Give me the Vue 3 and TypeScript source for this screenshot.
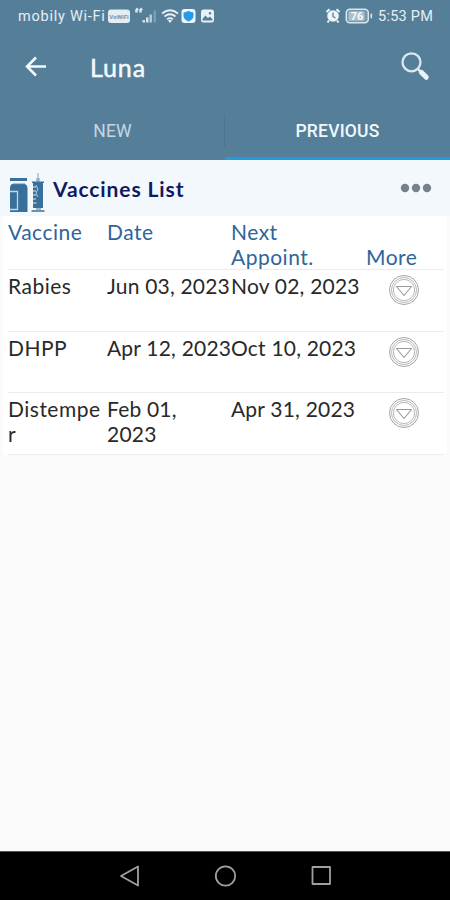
<script setup lang="ts">
interface VaccineRow {
  name: string[]
  date: string[]
  next: string
}

const rows: VaccineRow[] = [
  { name: ['Rabies'], date: ['Jun 03, 2023'], next: 'Nov 02, 2023' },
  { name: ['DHPP'], date: ['Apr 12, 2023'], next: 'Oct 10, 2023' },
  { name: ['Distempe', 'r'], date: ['Feb 01,', '2023'], next: 'Apr 31, 2023' },
]
</script>

<template>
  <div class="screen">
    <header class="top">
      <div class="status">
        <span class="carrier">mobily Wi-Fi</span>
        <svg class="status-icons" width="110" height="20" viewBox="0 0 110 20">
          <rect x="1" y="3.500" width="22" height="13.500" rx="3" fill="#e3edf3" />
          <text x="12" y="13" text-anchor="middle" class="vowifi">VoWiFi</text>
          <path d="M29.500 6.500v-2.500l1.500-1.500M33.500 6.500v-2.500l1.500-1.500" class="quote" />
          <g fill="#d5e3eb">
            <rect x="35.500" y="14" width="2.500" height="2.500" />
            <rect x="39" y="11.500" width="2.500" height="5" />
            <rect x="42.500" y="8.500" width="2.500" height="8" opacity=".75" />
            <rect x="46.500" y="4.500" width="2.500" height="12" opacity=".3" />
          </g>
          <g fill="none" stroke="#e6f0f5" stroke-width="1.700">
            <path d="M55 7.500q8-6.500 16 0" />
            <path d="M57.500 10.500q5.500-4.500 11 0" />
            <path d="M60 13.300q3-2.500 6 0" />
          </g>
          <path d="M61 14.500q2-1.500 4 0l-2 2.500z" fill="#e6f0f5" />
          <rect x="74.500" y="3" width="14" height="14" rx="3" fill="#f0f8fd" />
          <path d="M81.500 4.800q2.400 1.500 5 1.600v3.800q-.5 3.500-5 5.300q-4.500-1.800-5-5.300v-3.800q2.600-.1 5-1.600z" fill="#269bec" />
          <rect x="94" y="3.500" width="13" height="13" rx="2.500" fill="#e8f1f5" />
          <path d="M95.500 13l2.800-3.500 2.700 2.500 2-1.500 2.500 2.800v1.200h-10z" fill="#557f99" />
          <circle cx="103" cy="7.200" r="1.200" fill="#557f99" />
        </svg>
        <svg class="right-icons" width="50" height="20" viewBox="0 0 50 20">
          <circle cx="9" cy="10" r="5.800" fill="#eff5f8" />
          <path d="M2.500 6l3-2.700M15.500 6l-3-2.700M5 14.500l-1.500 2M13 14.500l1.500 2" stroke="#eff5f8" stroke-width="2" />
          <path d="M9 6.500v4l2.500 1.500" fill="none" stroke="#557f99" stroke-width="1.300" />
          <rect x="22.300" y="3.300" width="22" height="13.400" rx="3.500" fill="#7898ac" stroke="#d9e5ec" stroke-width="1.500" />
          <rect x="24.500" y="5.300" width="16" height="9.400" rx="1.500" fill="#a9c0ce" />
          <text x="33" y="14" text-anchor="middle" class="battery">76</text>
          <rect x="46.500" y="7.500" width="1.600" height="5" rx=".8" fill="#d9e5ec" />
        </svg>
        <span class="clock">5:53 PM</span>
      </div>

      <div class="appbar">
        <svg class="back" width="24" height="24" viewBox="0 0 24 24">
          <path d="M22 11.500H3.500M12 2.500L3 11.500l9 9" fill="none" stroke="#f4f9fc" stroke-width="2.500" />
        </svg>
        <h1>Luna</h1>
        <svg class="search" width="30" height="30" viewBox="0 0 30 30">
          <circle cx="11.500" cy="10.300" r="9" fill="none" stroke="#dce8ef" stroke-width="2.300" />
          <path d="M17.800 16.800l2.700 2.700" stroke="#dce8ef" stroke-width="2.500" />
          <path d="M21.300 20.300l5 5" stroke="#e8f2f8" stroke-width="5" stroke-linecap="round" />
        </svg>
      </div>

      <nav class="tabs">
        <span class="tab">NEW</span>
        <span class="tab active">PREVIOUS</span>
      </nav>
    </header>

    <section class="list-head">
      <svg class="vaccine-icon" width="38" height="42" viewBox="0 0 38 42">
        <g fill="#39709b">
          <rect x="2" y="6" width="17" height="3" />
          <path d="M4 12h13q2.500 1 2.500 4v24h-17.500v-24q0-3 2-4z" />
          <rect x="25" y="11" width="10" height="25" />
          <rect x="24" y="9.500" width="12" height="1.500" />
          <rect x="28" y="36" width="5" height="2" opacity=".5" />
          <rect x="23.500" y="38" width="13" height="2" opacity=".75" />
          <path d="M29 1h2v9h-2z" opacity=".3" />
          <path d="M28 6h4v3.500h-4z" opacity=".35" />
        </g>
        <path d="M5 11.500h12" stroke="#a7c1d4" stroke-width="1.200" />
        <path d="M2 19.500h7.500v18h-7.500" fill="none" stroke="#bfd8e7" stroke-width="1.300" />
        <path d="M25 15h3.500M25 19h3M25 23h3.500M25 27h3M25 31h3.500" stroke="#d8e9f3" stroke-width="1.200" />
        <path d="M28 13l2 4-2 4 2 4" fill="none" stroke="#a9c8dc" stroke-width="1" />
      </svg>
      <h2>Vaccines List</h2>
      <svg class="dots" width="32" height="10" viewBox="0 0 32 10">
        <circle cx="5" cy="5" r="4.200" />
        <circle cx="16" cy="5" r="4.200" />
        <circle cx="27" cy="5" r="4.200" />
      </svg>
    </section>

    <main class="table">
      <div class="row head">
        <span>Vaccine</span>
        <span>Date</span>
        <span>Next<br />Appoint.</span>
        <span class="more">More</span>
      </div>
      <div v-for="row in rows" :key="row.next" class="row">
        <div><div v-for="line in row.name" :key="line">{{ line }}</div></div>
        <div><div v-for="line in row.date" :key="line" class="date">{{ line }}</div></div>
        <div class="date">{{ row.next }}</div>
        <svg class="expand" width="32" height="32" viewBox="0 0 32 32">
          <g fill="none" stroke="#999" stroke-width=".9">
            <circle cx="16" cy="16" r="14.500" />
            <circle cx="16" cy="16" r="12.500" stroke="#b0b0b0" />
            <circle cx="16" cy="16" r="10.600" stroke="#b0b0b0" />
            <path d="M8.500 12.500h15l-7.500 9z" stroke-width="1.100" stroke-linejoin="round" />
          </g>
        </svg>
      </div>
    </main>

    <footer class="navbar">
      <svg width="24" height="24" viewBox="0 0 24 24"><path d="M21 2.500v19L4 12z" /></svg>
      <svg width="24" height="24" viewBox="0 0 24 24"><circle cx="12.500" cy="12" r="9.700" /></svg>
      <svg width="24" height="24" viewBox="0 0 24 24"><rect x="3.500" y="3" width="17.500" height="17" /></svg>
    </footer>
  </div>
</template>

<style>
body {
  margin: 0;
}
</style>

<style scoped>
.screen {
  width: 450px;
  height: 900px;
  display: flex;
  flex-direction: column;
  overflow: hidden;
  background: #fafafa;
  font-family: Lato, "Noto Sans", sans-serif;
}
.top {
  height: 160px;
  background: #557f99;
  color: #f4f9fc;
}
.status {
  height: 32px;
  display: flex;
  align-items: center;
  padding: 0 17px 0 18px;
  font-family: Roboto, sans-serif;
  font-size: 14.5px;
  color: #e6eff4;
  white-space: nowrap;
}
.carrier {
  width: 89px;
  letter-spacing: 0.75px;
}
.right-icons {
  margin-left: auto;
  margin-right: 4px;
}
.clock {
  width: 55px;
  letter-spacing: 0.25px;
}
.vowifi {
  font: bold 6.2px Roboto, sans-serif;
  fill: #7896a9;
}
.quote {
  fill: none;
  stroke: #dce8ef;
  stroke-width: 2.5;
}
.battery {
  font: bold 11px Roboto, sans-serif;
  fill: #f5fafc;
}
.appbar {
  height: 70px;
  display: flex;
  align-items: center;
  padding: 0 20px 0 24px;
}
h1 {
  margin: 0 0 0 42px;
  font-size: 25px;
  font-weight: 400;
  letter-spacing: 0.9px;
  -webkit-text-stroke: 0.5px currentColor;
}
.search {
  margin-left: auto;
}
.tabs {
  height: 58px;
  display: grid;
  grid-template-columns: 1fr 1fr;
}
.tab {
  box-sizing: border-box;
  display: flex;
  align-items: center;
  justify-content: center;
  padding-top: 3px;
  border-bottom: 3px solid transparent;
  font-family: Roboto, sans-serif;
  font-size: 17.5px;
  letter-spacing: 0.2px;
  color: #c5d7e2;
  background: linear-gradient(#4d7790, #4d7790) right 12px / 1px 34px no-repeat;
}
.tab.active {
  border-bottom-color: #229bdc;
  background: none;
  font-weight: 500;
  color: #f1f8fc;
}
.list-head {
  box-sizing: border-box;
  height: 56px;
  display: flex;
  align-items: center;
  padding: 0 18px 0 8px;
  background: #f3f8fc;
}
.vaccine-icon {
  margin-top: 10px;
}
h2 {
  margin: 1px 0 0 7px;
  font-size: 21px;
  font-weight: 700;
  letter-spacing: 0.9px;
  color: #101a62;
}
.dots {
  margin-left: auto;
  fill: #75818b;
}
.table {
  margin: 0 3px;
  padding: 0 3px 0 5px;
  background: #fff;
  border-radius: 0 0 4px 4px;
}
.row {
  box-sizing: border-box;
  height: 61.7px;
  display: grid;
  grid-template-columns: 99px 124px 135px 1fr;
  padding-top: 4px;
  border-bottom: 1.5px solid #ececec;
  font-size: 21px;
  line-height: 24.7px;
  letter-spacing: 0.5px;
  color: #292929;
  white-space: nowrap;
}
.row.head {
  height: 54px;
  color: #2e659b;
}
.more {
  align-self: end;
}
.date {
  letter-spacing: 0.2px;
}
.expand {
  margin: 0 0 0 22px;
}
.navbar {
  box-sizing: border-box;
  height: 49px;
  margin-top: auto;
  display: flex;
  align-items: center;
  justify-content: center;
  gap: 72px;
  border-top: 1px solid #555;
  background: #000;
}
.navbar svg {
  fill: none;
  stroke: #a0a0a0;
  stroke-width: 1.8;
  stroke-linejoin: round;
}
</style>
